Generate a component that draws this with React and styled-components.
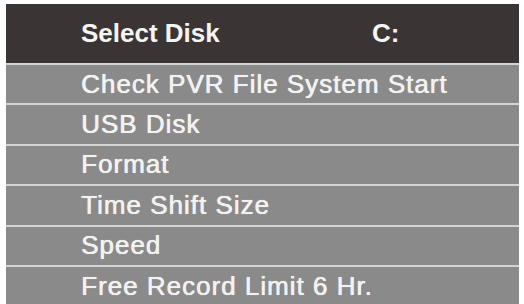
import React from 'react';
import styled, { createGlobalStyle } from 'styled-components';

const GlobalStyle = createGlobalStyle`
	body {
		margin: 0;
		background: #ffffff;
		font-family: "Liberation Sans", Arial, sans-serif;
	}
`

const Panel = styled.div`
	margin: 4px 0 0 6px;
	width: 513px;
	height: 300px;
	overflow: hidden;
	background: #8a8a8a;
	display: flex;
	flex-direction: column;
`

const Header = styled.div`
	height: 59px;
	flex: none;
	background: #3a3534;
	display: grid;
	grid-template-columns: 291px 1fr;
	align-items: center;
	padding-left: 75px;
	color: #f4f4f4;
	font-size: 26px;
	font-weight: bold;
`

const Row = styled.div`
	flex: none;
	height: 38.4px;
	border-top: 2px solid #d4d4d4;
	display: flex;
	align-items: center;
	padding-left: 75px;
	color: #f2f2f2;
	font-size: 26px;
	letter-spacing: 1px;
	white-space: nowrap;
	text-shadow: 0.4px 0 0 #f2f2f2, 0 0 1px rgba(255, 255, 255, 0.6);
`

const items = [
	'Check PVR File System Start',
	'USB Disk',
	'Format',
	'Time Shift Size',
	'Speed',
	'Free Record Limit 6 Hr.',
];

const App = () => {
	return (
		<>
			<GlobalStyle />
			<Panel>
				<Header>
					<span>Select Disk</span>
					<span>C:</span>
				</Header>
				{items.map((label) => (
					<Row key={label}>{label}</Row>
				))}
			</Panel>
		</>
	);
}

export default App;
